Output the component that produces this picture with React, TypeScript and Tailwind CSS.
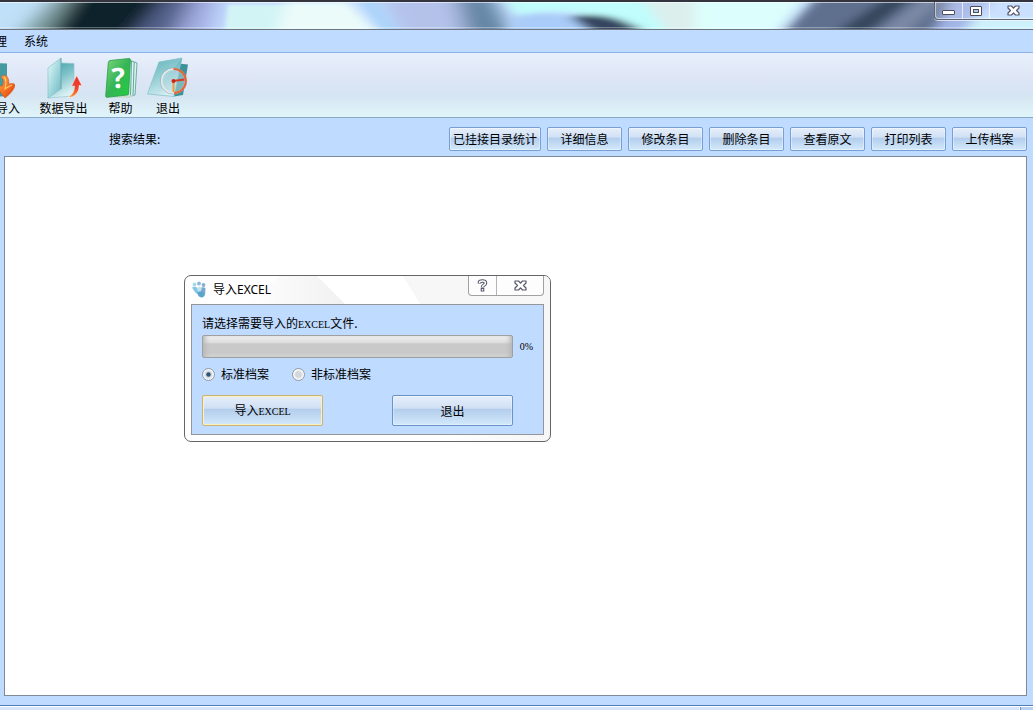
import { useState, type ReactNode } from 'react'

const actions = ['详细信息', '修改条目', '删除条目', '查看原文', '打印列表', '上传档案']

const glossy =
  'bg-[linear-gradient(to_bottom,#e6effa_0%,#d0e0f5_42%,#b3cdec_46%,#d3e9fb_100%)] hover:brightness-105'

function FolderShape() {
  return (
    <>
      <path d="M15 6 L28 6.500 V39 L2 41 Z" fill="url(#teal)" stroke="#8cc4cb" strokeWidth=".6" />
      <path d="M2 11 L15 1 V32 L2 41 Z" fill="url(#glass)" stroke="#86c3ca" strokeWidth=".7" />
      <path d="M15 1 V32" stroke="#5ea3ad" strokeWidth=".8" />
    </>
  )
}

function Gradients() {
  return (
    <svg className="absolute size-0" aria-hidden="true">
      <defs>
        <linearGradient id="teal" x1="0" y1="0" x2="0.4" y2="1">
          <stop offset="0" stopColor="#3f9fa5" />
          <stop offset=".5" stopColor="#7cc1c8" />
          <stop offset="1" stopColor="#d6eff2" />
        </linearGradient>
        <linearGradient id="glass" x1="0" y1="0" x2="1" y2="1">
          <stop offset="0" stopColor="#eafafb" />
          <stop offset=".5" stopColor="#a3d9de" />
          <stop offset="1" stopColor="#6fb6bf" />
        </linearGradient>
        <linearGradient id="red" x1="0" y1="0" x2="0" y2="1">
          <stop offset="0" stopColor="#e8302a" />
          <stop offset=".6" stopColor="#f0452a" />
          <stop offset="1" stopColor="#f9a13c" />
        </linearGradient>
        <linearGradient id="orange" x1="0" y1="0" x2="1" y2="1">
          <stop offset="0" stopColor="#fbb04a" />
          <stop offset=".6" stopColor="#f2691f" />
          <stop offset="1" stopColor="#cf3a12" />
        </linearGradient>
        <linearGradient id="green" x1="0" y1="0" x2="1" y2="1">
          <stop offset="0" stopColor="#7fd67a" />
          <stop offset=".5" stopColor="#35b556" />
          <stop offset="1" stopColor="#1fd03e" />
        </linearGradient>
      </defs>
    </svg>
  )
}

function ImportIcon() {
  return (
    <svg width="36" height="42" viewBox="0 0 36 42" aria-hidden="true">
      <path d="M15 6 L28 6.500 V39 L2 41 Z" fill="#459aa2" />
      <path d="M2 11 L15 1 V32 L2 41 Z" fill="url(#glass)" />
      <path
        d="M22 20 C26 16 30 19 30 27 L33 26.500 C35 26 37 28 35.500 30 C34 34 31 37 26 41 C23 38 20 34 19 29 L23 29 C25 25 25 23 22 20 Z"
        fill="url(#orange)"
        stroke="#c94a1a"
        strokeWidth=".5"
      />
      <path d="M25 20 C28 23 27 28 26 32 L29 30 L33 28" fill="none" stroke="#ffc76b" strokeWidth="1.200" />
    </svg>
  )
}

function ExportIcon() {
  return (
    <svg width="36" height="42" viewBox="0 0 36 42" aria-hidden="true">
      <FolderShape />
      <path
        d="M30.700 18.500 L36 28.700 L33 28.500 C33.500 35 29 41 21.500 40.500 C26 38 28.500 35 28.500 29 L25.500 29.200 Z"
        fill="url(#red)"
        stroke="#fff"
        strokeWidth=".5"
      />
    </svg>
  )
}

function HelpIcon() {
  return (
    <svg width="34" height="42" viewBox="0 0 34 42" aria-hidden="true">
      <path d="M25 3 L33 6 L31 38 L24 40 Z" fill="#dff2ee" stroke="#4b9d8e" strokeWidth=".8" />
      <path d="M27.500 4 L26.500 39 M30.200 5 L29 38.500" stroke="#4b9d8e" strokeWidth=".9" />
      <path d="M2 40.500 L24.500 38 L30 38.500 L25 41 Z" fill="#c9dccf" />
      <path
        d="M6 3.500 L25 1.500 Q26.500 1.500 26.400 3 L24.700 36.500 Q24.600 37.800 23 38 L3 40.300 Q1.600 40.300 1.700 39 L4.300 5.500 Q4.500 3.800 6 3.500 Z"
        fill="url(#green)"
        stroke="#2c9a4c"
        strokeWidth=".8"
      />
      <text
        x="14.500"
        y="31"
        textAnchor="middle"
        fill="#fff"
        fontSize="28"
        fontWeight="bold"
        fontFamily="Open Sans, sans-serif"
        transform="rotate(-3 14 22)"
      >
        ?
      </text>
    </svg>
  )
}

function ExitIcon() {
  return (
    <svg width="42" height="42" viewBox="0 0 42 42" aria-hidden="true">
      <path d="M26 6 L41 7.500 L36 38 L27 39.500 Z" fill="#3d9299" />
      <path d="M12 5 L35 1 L27 39.500 L.5 37 Z" fill="url(#teal)" stroke="#71b6be" strokeWidth=".6" />
      <path d="M12 5 L35 1 L8 36 L.5 37 Z" fill="#c8ecef" opacity=".25" />
      <circle cx="26.500" cy="24" r="12" fill="#b9dce1" fillOpacity=".5" stroke="#e3e9ec" strokeWidth="2" />
      <circle cx="26.500" cy="24" r="13.200" fill="none" stroke="#8a9ca6" strokeWidth=".5" />
      <path d="M26.500 12 A12 12 0 0 1 27 36" fill="none" stroke="#e2673d" strokeWidth="2.200" />
      <path d="M26.500 24 V35" stroke="#ee9a3d" strokeWidth="2" />
      <path d="M26 24 L37.500 22.500" stroke="#d93a22" strokeWidth="2" />
      <circle cx="26.500" cy="24" r="2" fill="#cd2418" />
    </svg>
  )
}

function TitleArt() {
  return (
    <svg
      className="absolute inset-0 size-full"
      viewBox="0 0 1033 30"
      preserveAspectRatio="none"
      aria-hidden="true"
    >
      <defs>
        <filter id="soft" x="-10%" y="-100%" width="120%" height="300%">
          <feGaussianBlur stdDeviation="11 3" />
        </filter>
        <filter id="crisp" x="-10%" y="-100%" width="120%" height="300%">
          <feGaussianBlur stdDeviation="7 3" />
        </filter>
        <filter id="edge" x="-10%" y="-100%" width="120%" height="300%">
          <feGaussianBlur stdDeviation="2 1" />
        </filter>
      </defs>
      <rect width="1033" height="30" fill="#c4dcff" />
      <g filter="url(#soft)">
        <path d="M-40 -15 H65 L20 45 H-40 Z" fill="#bfe0f8" />
        <path d="M62 -15 H95 L50 45 H10 Z" fill="#7d9c9e" />
        <path d="M80 -15 H178 L130 45 H44 Z" fill="#10202a" />
        <path d="M172 -15 H200 L170 45 H125 Z" fill="#53618a" />
        <path d="M198 -15 H222 L205 45 H170 Z" fill="#a0aadf" />
        <path d="M375 -15 H480 L500 45 H400 Z" fill="#b4c2ea" />
        <path d="M455 -15 H488 L516 45 H468 Z" fill="#6484a3" />
      </g>
      <g filter="url(#edge)">
        <path d="M228 3 H345 L365 40 H224 Z" fill="#d2f4f5" />
      </g>
      <g filter="url(#crisp)">
        <path d="M285 0 H348 L385 40 H275 Z" fill="#eafbfa" />
        <path d="M352 -15 H370 L405 45 H386 Z" fill="#a9d3fa" />
        <path d="M498 -15 H645 L690 45 H650 C600 8 560 6 515 15 Z" fill="#c0fdfc" />
        <path d="M512 17 C540 10 560 12 580 20 L600 40 H510 Z" fill="#a9ccf8" />
        <path d="M635 -15 H720 V45 H675 Z" fill="#dcefed" />
        <path d="M570 16 C600 11 628 17 652 40 H600 Z" fill="#36445e" />
        <path d="M695 -15 H812 L768 45 H695 Z" fill="#dcfffd" />
        <path d="M825 -15 H965 L925 45 H774 Z" fill="#5f708e" />
        <path d="M900 -15 H925 L855 45 H820 Z" fill="#34465d" />
        <path d="M935 -15 H955 L895 45 H865 Z" fill="#7d89a6" />
        <path d="M955 -15 H1000 L955 45 H930 Z" fill="#a3b5e6" />
        <path d="M975 18 H1060 V44 H955 Z" fill="#cdf1fb" />
      </g>
      <rect width="1033" height="1" fill="#fff" opacity=".65" />
      <rect y="28" width="1033" height="1" fill="#fff" opacity=".4" />
    </svg>
  )
}

function CloseGlyph() {
  return (
    <svg width="13" height="11" viewBox="0 0 13 11" aria-hidden="true">
      <path
        d="M1 1 H4.500 L6.500 3.200 L8.500 1 H12 V3 L9.500 5.500 L12 8 V10 H8.500 L6.500 7.800 L4.500 10 H1 V8 L3.500 5.500 L1 3 Z"
        fill="#fff"
        stroke="#55566a"
        strokeWidth="1.200"
        strokeLinejoin="round"
      />
    </svg>
  )
}

function TitleBar() {
  return (
    <header className="relative flex h-[30px] shrink-0 justify-end overflow-hidden border-t-2 border-b border-t-[#34343f] border-b-[#6d7680]">
      <TitleArt />
      <div className="relative flex h-[18px] rounded-bl-[4px] border-b border-l border-[#5c6475] bg-white/10 shadow-[0_1px_0_#ffffffa0,inset_1px_-1px_0_#ffffff80]">
        <button aria-label="最小化" className="flex w-7 items-center justify-center border-r border-white/70">
          <svg width="13" height="11" viewBox="0 0 13 11" aria-hidden="true">
            <rect x=".5" y="5.500" width="12" height="4" rx=".5" fill="#fff" stroke="#4d4d5c" />
          </svg>
        </button>
        <button aria-label="最大化" className="flex w-[27px] items-center justify-center border-r border-white/70">
          <svg width="12" height="10" viewBox="0 0 12 10" aria-hidden="true">
            <rect x=".5" y=".5" width="11" height="9" rx=".5" fill="#fff" stroke="#4d4d5c" />
            <rect x="3.500" y="3.500" width="5" height="3" fill="#a9cdec" stroke="#4d4d5c" />
          </svg>
        </button>
        <button aria-label="关闭" className="flex w-[43px] items-center justify-center pl-1">
          <CloseGlyph />
        </button>
      </div>
    </header>
  )
}

function ToolButton({ label, className, children }: { label: string; className: string; children: ReactNode }) {
  return (
    <button className={`flex shrink-0 flex-col ${className}`}>
      {children}
      <span className="leading-[18px]">{label}</span>
    </button>
  )
}

function ImportDialog() {
  const [kind, setKind] = useState('standard')

  const radio =
    'size-[13px] appearance-none rounded-full border border-[#8e9aa8] bg-[radial-gradient(circle,#d4d8dd_35%,#f6f7f8_60%)] checked:bg-[radial-gradient(circle,#2f5574_22%,#c9d3dc_34%,#f6f7f8_62%)]'

  return (
    <section
      role="dialog"
      aria-labelledby="dialog-title"
      className="absolute top-[275px] left-[184px] w-[367px] rounded-[7px] border border-[#66666a] bg-white bg-[linear-gradient(to_right,#fff_0%,#fff_70%,#f6f6f6_100%)] px-[6px] pb-[6px]"
    >
      <svg
        className="absolute top-0 left-0 h-7 w-full rounded-t-[6px]"
        viewBox="0 0 365 28"
        preserveAspectRatio="none"
        aria-hidden="true"
      >
        <defs>
          <linearGradient id="sheen" x1="0" x2="1">
            <stop offset="0" stopColor="#fff" />
            <stop offset="1" stopColor="#ededed" />
          </linearGradient>
        </defs>
        <path d="M95 0 H132 L160 28 H60 Z" fill="url(#sheen)" opacity=".8" />
        <path d="M218 0 H365 V28 H235 Z" fill="#f7f7f7" />
      </svg>
      <div className="relative flex h-7 items-start justify-between">
        <div className="flex h-7 items-center gap-[6px]">
          <svg width="16" height="18" viewBox="0 0 16 18" aria-hidden="true">
            <circle cx="3.500" cy="3.500" r="1.900" fill="#a9d8ec" />
            <circle cx="8" cy="2.500" r="1.900" fill="#8bb9d8" />
            <circle cx="12.500" cy="4" r="1.900" fill="#8aaed0" />
            <path d="M1 6.500 Q4 5 6.500 7 L8 13 Q5 13 3.500 10.500 Z" fill="#86c8e3" />
            <path d="M9.500 7 Q12 5.500 14.500 7 L14 15 L10 12 Z" fill="#7ba7cb" />
            <circle cx="8.500" cy="8" r="2.200" fill="#bfe3f1" />
            <path d="M6 11.500 Q10 9 13 12 L13 15.500 Q10 17.500 7.500 15 Z" fill="#5ba4cc" />
          </svg>
          <h2 id="dialog-title" className="font-['Noto_Sans','Noto_Sans_CJK_SC',sans-serif] text-xs">
            导入EXCEL
          </h2>
        </div>
        <div className="flex h-5 rounded-b-[4px] border border-t-0 border-[#a0a0a4] bg-white/80">
          <button
            aria-label="帮助"
            className="flex w-7 items-center justify-center border-r border-[#b4b4b8]"
          >
            <svg width="11" height="13" viewBox="0 0 11 13" aria-hidden="true">
              <path
                d="M2.500 4.500 V3.500 Q2.500 2 5.500 2 Q8.500 2 8.500 4 Q8.500 5.500 6.500 6.500 Q5.500 7 5.500 8.500 M5.500 9 V12.500"
                fill="none"
                stroke="#55566a"
                strokeWidth="3.600"
              />
              <path
                d="M2.500 4 V3.500 Q2.500 2 5.500 2 Q8.500 2 8.500 4 Q8.500 5.500 6.500 6.500 Q5.500 7 5.500 8 M5.500 10 V11.500"
                fill="none"
                stroke="#fff"
                strokeWidth="1.500"
              />
            </svg>
          </button>
          <button aria-label="关闭" className="flex w-[46px] items-center justify-center">
            <CloseGlyph />
          </button>
        </div>
      </div>

      <div className="relative border border-[#96969a] bg-[#bfdbff] px-[10px] pt-[10px] pb-2">
        <p className="h-4 leading-4">
          请选择需要导入的<span className="font-['Liberation_Serif',serif] text-[10px]">EXCEL</span>文件.
        </p>
        <div className="mt-1 flex h-[23px] items-center gap-[7px]">
          <div
            role="progressbar"
            aria-label="导入进度"
            aria-valuenow={0}
            aria-valuemin={0}
            aria-valuemax={100}
            className="h-[23px] w-[311px] rounded-[2px] border border-[#a0a0a0] bg-[linear-gradient(to_bottom,#f0f0f0_0%,#dedede_30%,#c9c9c9_38%,#c9c9c9_80%,#d6d6d6_100%)] shadow-[inset_5px_0_5px_-3px_#b4b4b4,inset_-5px_0_5px_-3px_#b4b4b4]"
          />
          <span className="font-['Liberation_Serif',serif] text-[10px]">0%</span>
        </div>
        <div className="mt-2 flex h-4 items-center gap-[23px]">
          <label className="flex items-center gap-[6px]">
            <input
              type="radio"
              name="kind"
              className={radio}
              checked={kind === 'standard'}
              onChange={() => setKind('standard')}
            />
            标准档案
          </label>
          <label className="flex items-center gap-[6px]">
            <input
              type="radio"
              name="kind"
              className={radio}
              checked={kind === 'other'}
              onChange={() => setKind('other')}
            />
            非标准档案
          </label>
        </div>
        <div className="mt-[13px] flex w-[311px] justify-between">
          <button
            className={`h-[31px] w-[121px] rounded-[2px] border border-[#c9b377] shadow-[inset_0_0_0_1px_#fdf0c0] ${glossy}`}
          >
            导入<span className="font-['Liberation_Serif',serif] text-[10px]">EXCEL</span>
          </button>
          <button
            className={`h-[31px] w-[121px] rounded-[2px] border border-[#6a93c8] shadow-[inset_0_0_0_1px_#ffffff50] ${glossy}`}
          >
            退出
          </button>
        </div>
      </div>
    </section>
  )
}

export default function App() {
  const actionClass = `h-6 rounded-[2px] border border-[#779fd4] shadow-[inset_0_0_0_1px_#ffffff60] ${glossy}`

  return (
    <div className="relative flex min-h-screen flex-col overflow-hidden bg-[#bfdbff] font-['Noto_Sans_CJK_SC',sans-serif] text-xs text-black">
      <Gradients />
      <TitleBar />

      <nav className="-ml-[5px] flex h-[23px] items-center gap-[17px] border-b border-[#8db2e8]">
        <button>理</button>
        <button>系统</button>
      </nav>

      <div className="flex h-[65px] border-b border-[#8aa9c6] bg-[linear-gradient(to_bottom,#e8effc_0%,#dce5f5_45%,#d5e4f2_65%,#e0f5fa_100%)] pt-1">
        <ToolButton label="导入" className="-ml-7 w-12 items-end">
          <span className="mr-[5px]">
            <ImportIcon />
          </span>
        </ToolButton>
        <ToolButton label="数据导出" className="w-[87px] items-center">
          <ExportIcon />
        </ToolButton>
        <ToolButton label="帮助" className="-ml-[10px] w-[47px] items-center">
          <HelpIcon />
        </ToolButton>
        <ToolButton label="退出" className="w-12 items-center">
          <ExitIcon />
        </ToolButton>
      </div>

      <div className="flex h-[38px] items-center justify-between pt-1 pr-[6px] pl-[109px]">
        <span>搜索结果:</span>
        <div className="flex gap-[6px]">
          <button className={`w-[92px] ${actionClass}`}>已挂接目录统计</button>
          {actions.map((label) => (
            <button key={label} className={`w-[75px] ${actionClass}`}>
              {label}
            </button>
          ))}
        </div>
      </div>

      <main className="mr-[6px] mb-[9px] ml-1 flex-1 border border-[#7f8a99] bg-white" />

      <footer className="flex h-[5px] border-t border-[#4f7db5] bg-white pt-px">
        <div className="flex-1 bg-[#d6e5fa]" />
        <div className="ml-px w-[13px] border-l border-[#6f90c0] bg-[#b9d2f3]" />
      </footer>

      <ImportDialog />
    </div>
  )
}
